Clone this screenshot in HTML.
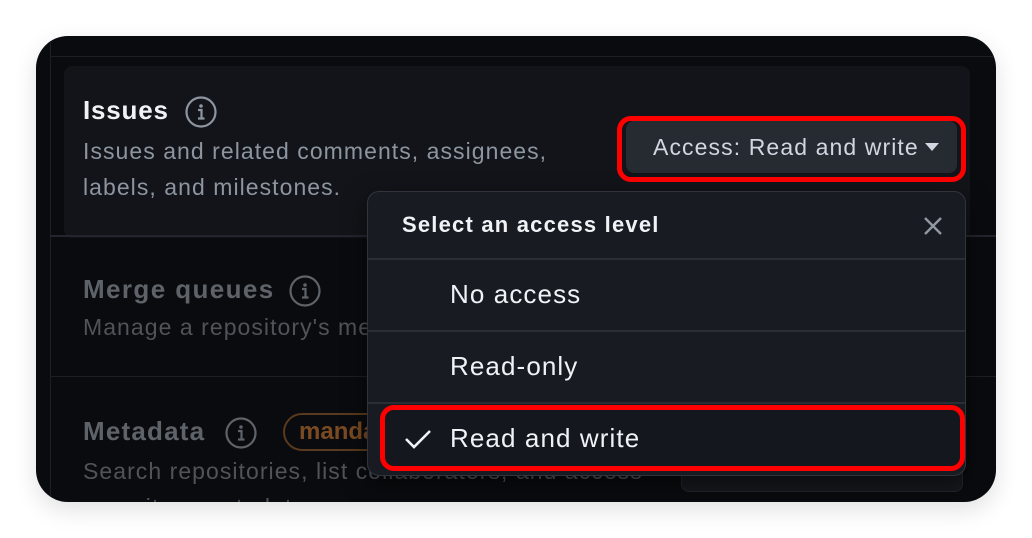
<!DOCTYPE html>
<html><head><style>
*{margin:0;padding:0;box-sizing:border-box}
body{width:1032px;height:538px;background:#fff;position:relative;overflow:hidden;font-family:"Liberation Sans",sans-serif}
.card{position:absolute;left:36px;top:36px;width:960px;height:466px;background:#0a0b0e;border-radius:32px;overflow:hidden;box-shadow:0 8px 24px rgba(0,0,0,.12)}
.a{position:absolute;white-space:nowrap}
</style></head><body>
<div class="card">
 <div class="a" style="left:14px;top:0;width:1px;height:466px;background:#1c1f25"></div>
 <div class="a" style="left:14px;top:20px;width:946px;height:1px;background:#1c1f25"></div>
 <div class="a" style="left:28px;top:30px;width:906px;height:172px;background:#121419;border-radius:8px"></div>
 <div class="a" style="left:14px;top:199px;width:946px;height:2px;background:#22262c"></div>
 <div class="a" style="left:14px;top:340px;width:946px;height:1px;background:#1c1f25"></div>

 <div class="a" style="left:47px;top:59px;font-size:26px;letter-spacing:0.8px;font-weight:bold;color:#f0f3f6">Issues</div>
 <svg class="a" style="left:148px;top:59px" width="34" height="34" viewBox="0 0 34 34"><circle cx="17" cy="17" r="14.5" fill="none" stroke="#8d96a0" stroke-width="2.2"/><circle cx="17" cy="11" r="1.8" fill="#8d96a0"/><path d="M14 15h3.5v8M14 23.5h6.5" stroke="#8d96a0" stroke-width="2.2" fill="none"/></svg>
 <div class="a" style="left:47px;top:97px;font-size:23px;letter-spacing:1.05px;line-height:36px;color:#8d96a0">Issues and related comments, assignees,<br>labels, and milestones.</div>

 <div class="a" style="left:47px;top:238px;font-size:26px;letter-spacing:1.4px;font-weight:bold;color:#5e636a">Merge queues</div>
 <svg class="a" style="left:252px;top:238px" width="34" height="34" viewBox="0 0 34 34"><circle cx="17" cy="17" r="14.5" fill="none" stroke="#5e636a" stroke-width="2.2"/><circle cx="17" cy="11" r="1.8" fill="#5e636a"/><path d="M14 15h3.5v8M14 23.5h6.5" stroke="#5e636a" stroke-width="2.2" fill="none"/></svg>
 <div class="a" style="left:47px;top:278px;font-size:23px;letter-spacing:1.05px;color:#4f545a">Manage a repository's merge queues</div>

 <div class="a" style="left:47px;top:380px;font-size:26px;letter-spacing:1.2px;font-weight:bold;color:#5e636a">Metadata</div>
 <svg class="a" style="left:188px;top:380px" width="34" height="34" viewBox="0 0 34 34"><circle cx="17" cy="17" r="14.5" fill="none" stroke="#5e636a" stroke-width="2.2"/><circle cx="17" cy="11" r="1.8" fill="#5e636a"/><path d="M14 15h3.5v8M14 23.5h6.5" stroke="#5e636a" stroke-width="2.2" fill="none"/></svg>
 <div class="a" style="left:247px;top:377px;height:38px;padding:0 14px;border:2px solid #5a3a1e;border-radius:20px;font-size:24px;line-height:34px;font-weight:bold;color:#7a4a22">mandatory</div>
 <div class="a" style="left:47px;top:417px;font-size:23px;letter-spacing:1.05px;line-height:36px;color:#4f545a">Search repositories, list collaborators, and access<br>repository metadata.</div>
 <div class="a" style="left:645px;top:420px;width:282px;height:36px;background:#15181d;border:1px solid #22262c;border-radius:8px"></div>

 <div class="a" style="left:581px;top:80px;width:349px;height:66px;border:5px solid #f00;border-radius:14px"></div>
 <div class="a" style="left:590px;top:85px;width:331px;height:52px;background:#262a31;border-radius:8px;font-size:23px;letter-spacing:1.1px;color:#d1d7e0;line-height:52px;padding-left:27px">Access: Read and write</div>
 <svg class="a" style="left:888px;top:106px" width="16" height="10"><path d="M1 1h14l-7 8z" fill="#d1d7e0"/></svg>

 <div class="a" style="left:331px;top:155px;width:599px;height:285px;background:#181b22;border:1px solid #30353d;border-radius:12px;overflow:hidden;box-shadow:0 8px 24px rgba(0,0,0,.5)">
  <div class="a" style="left:34px;top:20px;font-size:22px;letter-spacing:1.2px;font-weight:bold;color:#f0f3f6">Select an access level</div>
  <svg class="a" style="left:553px;top:22px" width="24" height="24"><path d="M4 4l16 16M20 4L4 20" stroke="#9198a1" stroke-width="2.4"/></svg>
  <div class="a" style="left:0;top:66px;width:599px;height:2px;background:#2a2e35"></div>
  <div class="a" style="left:0;top:138px;width:599px;height:2px;background:#2a2e35"></div>
  <div class="a" style="left:0;top:210px;width:599px;height:2px;background:#2a2e35"></div>
  <div class="a" style="left:82px;top:87px;font-size:26px;letter-spacing:1.1px;color:#f0f3f6">No access</div>
  <div class="a" style="left:82px;top:159px;font-size:26px;letter-spacing:1.1px;color:#f0f3f6">Read-only</div>
  <div class="a" style="left:12px;top:213px;width:585px;height:66px;border:5px solid #f00;border-radius:14px;background:#14171d"></div>
  <svg class="a" style="left:36px;top:236px" width="28" height="22"><path d="M2 11l8 8L26 3" stroke="#f0f3f6" stroke-width="2.6" fill="none"/></svg>
  <div class="a" style="left:82px;top:231px;font-size:26px;letter-spacing:1.1px;color:#f0f3f6">Read and write</div>
 </div>
</div>
</body></html>
